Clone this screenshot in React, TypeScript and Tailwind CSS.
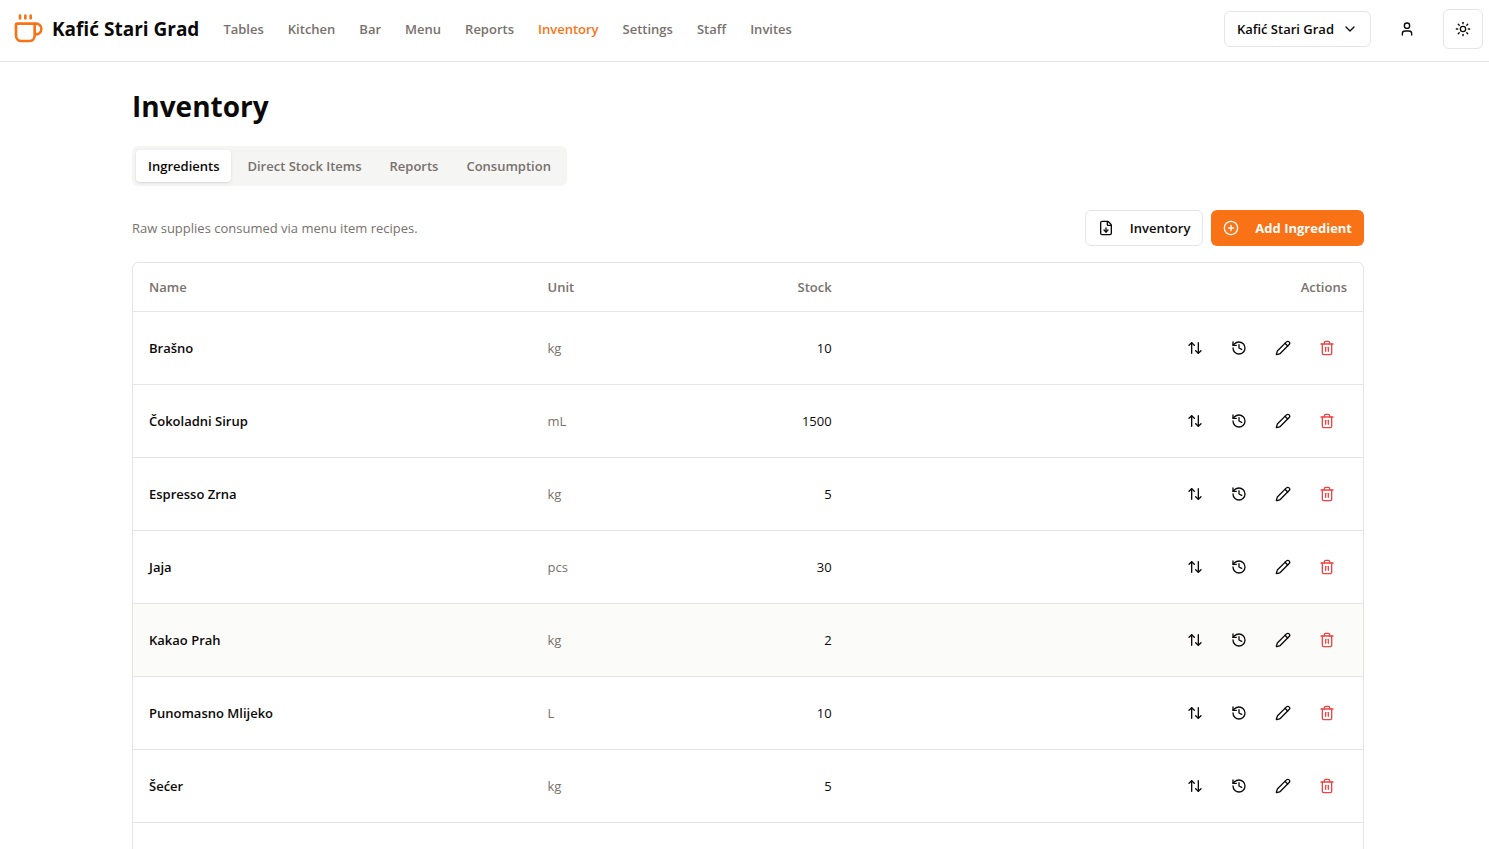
import { ArrowUpDown, ChevronDown, CirclePlus, Coffee, FileDown, History, Pencil, Sun, Trash2, User } from "lucide-react";

type Ingredient = {
  id: number;
  name: string;
  unit: string;
  stock: number;
};

const navItems = ["Tables", "Kitchen", "Bar", "Menu", "Reports", "Inventory", "Settings", "Staff", "Invites"];
const tabs = ["Ingredients", "Direct Stock Items", "Reports", "Consumption"];

const ingredients: Ingredient[] = [
  { id: 1, name: "Brašno", unit: "kg", stock: 10 },
  { id: 2, name: "Čokoladni Sirup", unit: "mL", stock: 1500 },
  { id: 3, name: "Espresso Zrna", unit: "kg", stock: 5 },
  { id: 4, name: "Jaja", unit: "pcs", stock: 30 },
  { id: 5, name: "Kakao Prah", unit: "kg", stock: 2 },
  { id: 6, name: "Punomasno Mlijeko", unit: "L", stock: 10 },
  { id: 7, name: "Šećer", unit: "kg", stock: 5 },
];

const rowActions = [
  { label: "Adjust stock", Icon: ArrowUpDown, color: "text-stone-950" },
  { label: "History", Icon: History, color: "text-stone-950" },
  { label: "Edit", Icon: Pencil, color: "text-stone-950" },
  { label: "Delete", Icon: Trash2, color: "text-[#ef4444]" },
];

function Header() {
  return (
    <header className="flex h-[62px] items-center justify-between border-b border-[#e5e5e5] pr-[6px] pb-1 pl-3">
      <div className="flex items-center gap-6">
        <a href="#" className="flex items-center gap-2 text-[19px] leading-8 font-bold">
          <Coffee className="size-8 text-[#f97316]" />
          Kafić Stari Grad
        </a>
        <nav className="flex gap-6 text-[13px] leading-5 font-semibold">
          {navItems.map((item) => (
            <a key={item} href="#" className={item === "Inventory" ? "text-[#f97316]" : "text-[#78716c]"}>
              {item}
            </a>
          ))}
        </nav>
      </div>
      <div className="flex items-center">
        <button className="flex h-9 items-center gap-2 rounded-md border border-[#e5e5e5] px-3 text-[13px] leading-5 font-semibold">
          Kafić Stari Grad
          <ChevronDown className="size-4" />
        </button>
        <button aria-label="Account" className="mx-4 flex size-10 items-center justify-center">
          <User className="size-4" />
        </button>
        <button aria-label="Toggle theme" className="flex size-10 items-center justify-center rounded-md border border-[#e5e5e5]">
          <Sun className="size-4" />
        </button>
      </div>
    </header>
  );
}

function IngredientTable() {
  return (
    <div className="overflow-hidden rounded-md border border-[#e5e5e5]">
      <table className="w-full table-fixed text-[13px] leading-5">
        <colgroup>
          <col className="w-[32.4%]" />
          <col className="w-[13.7%]" />
          <col className="w-[12%]" />
          <col />
        </colgroup>
        <thead>
          <tr className="h-12 text-[#78716c]">
            <th className="px-4 text-left font-semibold">Name</th>
            <th className="px-4 text-left font-semibold">Unit</th>
            <th className="px-4 text-right font-semibold">Stock</th>
            <th className="px-4 text-right font-semibold">Actions</th>
          </tr>
        </thead>
        <tbody>
          {ingredients.map((item) => (
            <tr key={item.id} className={`h-[73px] border-t border-[#e5e5e5] ${item.name === "Kakao Prah" ? "bg-[#fbfbfa]" : ""}`}>
              <td className="px-4 font-semibold">{item.name}</td>
              <td className="px-4 text-[#78716c]">{item.unit}</td>
              <td className="px-4 text-right">{item.stock}</td>
              <td className="px-4">
                <div className="flex justify-end gap-1">
                  {rowActions.map(({ label, Icon, color }) => (
                    <button key={label} aria-label={`${label}: ${item.name}`} className={`flex size-10 items-center justify-center ${color}`}>
                      <Icon className="size-4" />
                    </button>
                  ))}
                </div>
              </td>
            </tr>
          ))}
          <tr className="h-[73px] border-t border-[#e5e5e5]">
            <td colSpan={4} />
          </tr>
        </tbody>
      </table>
    </div>
  );
}

export default function App() {
  return (
    <div className="h-screen overflow-hidden bg-white font-['Open_Sans',sans-serif] text-stone-950">
      <Header />
      <div className="pl-[7px]">
        <main className="mx-auto max-w-7xl px-6 pt-6">
          <h1 className="text-[28px] leading-10 font-bold">Inventory</h1>
          <div role="tablist" className="mt-5 inline-flex h-10 items-center gap-1 rounded-md bg-[#f5f5f4] p-1">
            {tabs.map((tab) => (
              <button
                key={tab}
                role="tab"
                aria-selected={tab === "Ingredients"}
                className={`h-8 rounded-sm px-3 text-[13px] leading-5 font-semibold ${tab === "Ingredients" ? "bg-white shadow-sm" : "text-[#78716c]"}`}
              >
                {tab}
              </button>
            ))}
          </div>
          <div className="mt-6 mb-4 flex items-center justify-between">
            <p className="text-[13px] leading-5 text-[#78716c]">Raw supplies consumed via menu item recipes.</p>
            <div className="flex gap-2">
              <button className="flex h-9 items-center gap-4 rounded-md border border-[#e5e5e5] px-3 text-[13px] leading-5 font-semibold">
                <FileDown className="size-4" />
                Inventory
              </button>
              <button className="flex h-9 items-center gap-4 rounded-md bg-[#f97316] px-3 text-[13px] leading-5 font-bold text-stone-50">
                <CirclePlus className="size-4" />
                Add Ingredient
              </button>
            </div>
          </div>
          <IngredientTable />
        </main>
      </div>
    </div>
  );
}
